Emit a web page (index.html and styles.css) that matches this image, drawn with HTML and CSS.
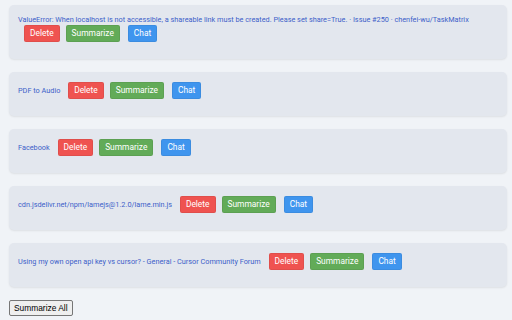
FILE: index.html
```html
<!DOCTYPE html>
<html>
<head>
<meta charset="utf-8">
<link rel="stylesheet" href="styles.css">
</head>
<body>
<div class="list">
  <div class="card">
    <a class="title" href="#">ValueError: When localhost is not accessible, a shareable link must be created. Please set share=True. · Issue #250 · chenfei-wu/TaskMatrix</a>
    <button class="btn del">Delete</button><button class="btn sum">Summarize</button><button class="btn chat">Chat</button>
  </div>
  <div class="card">
    <a class="title" href="#">PDF to Audio</a>
    <button class="btn del">Delete</button><button class="btn sum">Summarize</button><button class="btn chat">Chat</button>
  </div>
  <div class="card">
    <a class="title" href="#">Facebook</a>
    <button class="btn del">Delete</button><button class="btn sum">Summarize</button><button class="btn chat">Chat</button>
  </div>
  <div class="card">
    <a class="title" href="#">cdn.jsdelivr.net/npm/lamejs@1.2.0/lame.min.js</a>
    <button class="btn del">Delete</button><button class="btn sum">Summarize</button><button class="btn chat">Chat</button>
  </div>
  <div class="card">
    <a class="title" href="#">Using my own open api key vs cursor? - General - Cursor Community Forum</a>
    <button class="btn del">Delete</button><button class="btn sum">Summarize</button><button class="btn chat">Chat</button>
  </div>
</div>
<button class="all">Summarize All</button>
</body>
</html>
```
FILE: styles.css
```css
html, body {
  margin: 0;
  background: #f0f3f7;
}
body {
  padding: 5px 5px 0 9px;
  font-family: Roboto, "Liberation Sans", sans-serif;
}
.card {
  background: #e3e7ee;
  border-radius: 5px;
  box-shadow: 0 1px 2px rgba(0, 0, 0, 0.08);
  padding: 10px 9px 17px 9px;
  margin-bottom: 13px;
  font-size: 7.3px;
  line-height: 10px;
}
.title {
  color: #3d5fc9;
  text-decoration: none;
  font-size: 7.3px;
}
.btn {
  display: inline-block;
  height: 17px;
  padding: 0 5px;
  margin-left: 6px;
  border: 1px solid rgba(0, 0, 0, 0.06);
  border-radius: 2px;
  color: #fff;
  font-family: Roboto, "Liberation Sans", sans-serif;
  font-size: 8.4px;
  line-height: 15px;
  vertical-align: baseline;
}
.btn.chat { margin-left: 8px; }
.del { background: #ef5350; }
.sum { background: #62ab58; }
.chat { background: #3f95ee; }
.all {
  display: block;
  font-family: "Liberation Sans", Arial, sans-serif;
  font-size: 8.4px;
  height: 16px;
  padding: 0 4px;
  background: #efefef;
  border: 1px solid #767676;
  border-radius: 2px;
  color: #000;
}
```
